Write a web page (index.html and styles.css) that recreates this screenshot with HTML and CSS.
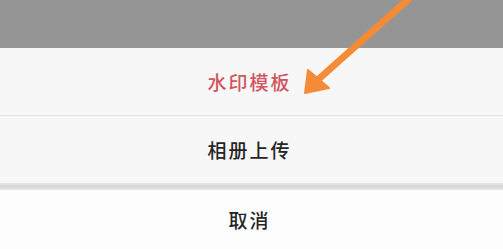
FILE: index.html
```html
<!DOCTYPE html>
<html lang="zh-CN">
<head>
  <meta charset="UTF-8">
  <meta name="viewport" content="width=device-width, initial-scale=1">
  <title>水印模板</title>
  <link rel="stylesheet" href="styles.css">
</head>
<body>

  <div class="screen">
    <div class="mask"></div>

    <div class="sheet">
      <div class="sheet-item accent">水印模板</div>
      <div class="sheet-item">相册上传</div>
      <div class="sheet-gap"></div>
      <div class="sheet-item cancel">取消</div>
    </div>

    <!-- 指示箭头 -->
    <svg class="pointer" width="503" height="249" viewBox="0 0 503 249">
      <line x1="412" y1="-4" x2="312" y2="85" stroke="#f48b36" stroke-width="7" stroke-linecap="round"/>
      <polygon points="305,93 308,70 329,88" fill="#f48b36" stroke="#f48b36" stroke-width="2" stroke-linejoin="round"/>
    </svg>
  </div>

</body>
</html>
```

FILE: styles.css
```css
body {
  margin: 0;
  font-family: "Noto Sans CJK SC", "Noto Sans", sans-serif;
  background: #f7f7f7;
}

.screen {
  position: relative;
  width: 503px;
  height: 249px;
  overflow: hidden;
  display: flex;
  flex-direction: column;
}

.mask {
  height: 48px;
  flex-shrink: 0;
  background: #959595;
}

.sheet {
  flex: 1;
  display: flex;
  flex-direction: column;
  background: #f7f7f7;
}

.sheet-item {
  height: 67px;
  display: flex;
  align-items: center;
  justify-content: center;
  padding-right: 4px;
  font-size: 19px;
  font-weight: 500;
  letter-spacing: 2px;
  color: #262626;
}

.sheet-item.accent {
  color: #d2555f;
  border-bottom: 1px solid #e4e4e4;
}

.sheet-gap {
  height: 7px;
  background: linear-gradient(#e6e6e6, #d6d6d6, #e8e8e8);
}

.sheet-item.cancel {
  flex: 1;
  background: #fdfdfd;
}

/* 箭头覆盖在内容上方 */
.pointer {
  position: absolute;
  top: 0;
  left: 0;
  pointer-events: none;
}
```
